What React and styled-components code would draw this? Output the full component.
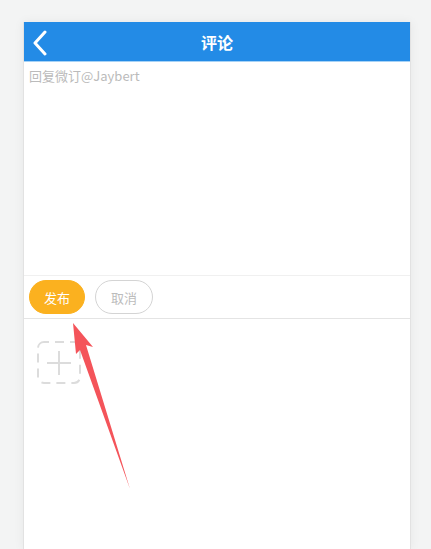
import React from "react";
import styled, { createGlobalStyle } from "styled-components";

const Global = createGlobalStyle`
  html, body {
    margin: 0;
    padding: 0;
    background: #f3f4f4;
    font-family: "Liberation Sans", "Noto Sans CJK SC", sans-serif;
    overflow: hidden;
  }
`;

const Page = styled.div`
  position: relative;
  width: 431px;
  height: 549px;
  padding-top: 22px;
  box-sizing: border-box;
  overflow: hidden;
`;

const Phone = styled.div`
  margin-left: 23px;
  width: 388px;
  height: 527px;
  background: #fff;
  border: 1px solid #e2e2e2;
  border-top: none;
  border-bottom: none;
  box-sizing: border-box;
  box-shadow: 0 0 10px rgba(0, 0, 0, 0.06);
  display: flex;
  flex-direction: column;
`;

const Header = styled.div`
  height: 40px;
  flex-shrink: 0;
  background: #238be6;
  border-bottom: 1px solid #a6d2f6;
  display: flex;
  align-items: center;
  justify-content: center;
  position: relative;
  box-sizing: border-box;
`;

const Back = styled.button`
  position: absolute;
  left: 8px;
  top: 8px;
  width: 18px;
  height: 26px;
  padding: 0;
  border: none;
  background: none;
`;

const Title = styled.h1`
  margin: 0;
  color: #fff;
  font-size: 16px;
  font-weight: 700;
  font-family: "Noto Sans CJK SC", sans-serif;
`;

const Editor = styled.textarea`
  height: 214px;
  flex-shrink: 0;
  border: none;
  border-bottom: 1px solid #f0f0f0;
  padding: 4px 5px;
  margin: 0;
  resize: none;
  outline: none;
  font-size: 13px;
  font-family: "Noto Sans CJK SC", sans-serif;
  color: #333;
  box-sizing: border-box;
  &::placeholder {
    color: #bbb;
  }
`;

const Actions = styled.div`
  height: 43px;
  flex-shrink: 0;
  border-bottom: 1px solid #e4e4e4;
  display: flex;
  align-items: center;
  gap: 10px;
  padding-left: 5px;
  box-sizing: border-box;
`;

const Pill = styled.button`
  height: 34px;
  padding: 0;
  width: ${(p) => (p.$primary ? "56px" : "58px")};
  border-radius: 17px;
  font-size: 13px;
  font-family: "Noto Sans CJK SC", sans-serif;
  background: ${(p) => (p.$primary ? "#fbb11f" : "#fff")};
  color: ${(p) => (p.$primary ? "#fff" : "#bcbcbc")};
  border: 1px solid ${(p) => (p.$primary ? "#fbb11f" : "#d4d4d4")};
  box-sizing: border-box;
`;

const Uploads = styled.div`
  padding: 22px 0 0 13px;
`;

const AddBox = styled.div`
  width: 44px;
  height: 44px;
`;

const Overlay = styled.svg`
  position: absolute;
  left: 0;
  top: 0;
  pointer-events: none;
`;

export default function App() {
  return (
    <Page>
      <Global />
      <Phone>
        <Header>
          <Back aria-label="返回">
            <svg width="18" height="26" viewBox="0 0 18 26">
              <path d="M13 2 L3 13 L13 24" fill="none" stroke="#fff" strokeWidth="3" strokeLinecap="round" strokeLinejoin="round" />
            </svg>
          </Back>
          <Title>评论</Title>
        </Header>
        <Editor placeholder="回复微订@Jaybert" />
        <Actions>
          <Pill $primary>发布</Pill>
          <Pill>取消</Pill>
        </Actions>
        <Uploads>
          <AddBox>
            <svg width="44" height="44" viewBox="0 0 44 44">
              <rect x="1" y="1" width="42" height="41" rx="6" fill="none" stroke="#dcdcdc" strokeWidth="2" strokeDasharray="9 6" strokeDashoffset="4" />
              <path d="M22 10 V34 M10 22 H34" stroke="#dcdcdc" strokeWidth="2" />
            </svg>
          </AddBox>
        </Uploads>
      </Phone>
      <Overlay width="431" height="549">
        <polygon points="73,323 93,347 86,345 130,489 80,350 76,354" fill="#f4545a" />
      </Overlay>
    </Page>
  );
}
